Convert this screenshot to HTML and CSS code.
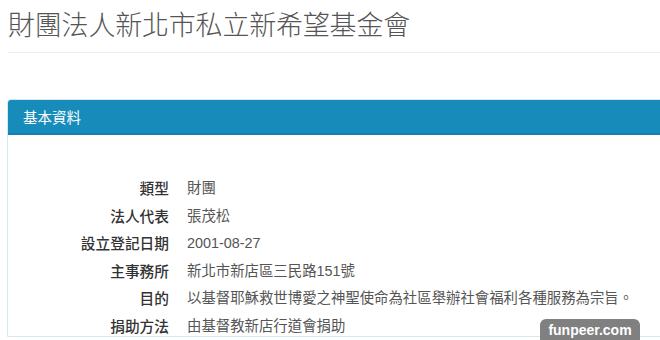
FILE: index.html
```html
<!DOCTYPE html>
<html lang="zh-Hant">
<head>
  <meta charset="UTF-8">
  <title>財團法人新北市私立新希望基金會</title>
  <link rel="stylesheet" href="styles.css">
</head>
<body>
  <div class="page">
    <!-- Page header -->
    <h1 class="page-title">財團法人新北市私立新希望基金會</h1>

    <!-- Basic info panel -->
    <div class="panel">
      <div class="panel-heading">基本資料</div>
      <dl class="info-list">
        <dt>類型</dt><dd>財團</dd>
        <dt>法人代表</dt><dd>張茂松</dd>
        <dt>設立登記日期</dt><dd>2001-08-27</dd>
        <dt>主事務所</dt><dd>新北市新店區三民路151號</dd>
        <dt>目的</dt><dd>以基督耶穌救世博愛之神聖使命為社區舉辦社會福利各種服務為宗旨。</dd>
        <dt>捐助方法</dt><dd>由基督教新店行道會捐助</dd>
      </dl>
    </div>
  </div>

  <div class="watermark">funpeer.com</div>
</body>
</html>
```

FILE: styles.css
```css
* {
  margin: 0;
  padding: 0;
  box-sizing: border-box;
}

html, body {
  overflow: hidden;
}

body {
  background: #fff;
  font-family: "Liberation Sans", "Noto Sans CJK TC", sans-serif;
  color: #555;
  height: 340px;
  position: relative;
}

.page {
  width: 680px;
  padding-left: 8px;
}

.page-title {
  font-family: "Noto Sans CJK TC", sans-serif;
  font-size: 27px;
  font-weight: 300;
  color: #555;
  line-height: 34px;
  padding-top: 7px;
  padding-bottom: 11px;
  border-bottom: 1px solid #eee;
  letter-spacing: -0.2px;
}

.panel {
  margin-top: 46px;
  margin-left: -1px;
  border: 1px solid #d6e9f2;
  border-radius: 4px 0 0 0;
}

.panel-heading {
  background: #178cbb;
  border-bottom: 2px solid #1480ad;
  color: #fff;
  font-family: "Noto Sans CJK TC", sans-serif;
  font-size: 14.5px;
  line-height: 33px;
  padding-left: 15px;
  border-radius: 3px 0 0 0;
}

.info-list {
  display: grid;
  grid-template-columns: 146px 1fr;
  column-gap: 18px;
  row-gap: 7.6px;
  padding: 43px 15px 0;
  line-height: 20px;
}

.info-list dt {
  text-align: right;
  font-family: "Noto Sans CJK TC", sans-serif;
  font-size: 14.7px;
  font-weight: 500;
  color: #333;
}

.info-list dd {
  font-size: 14.4px;
  color: #555;
}

.watermark {
  position: absolute;
  left: 540px;
  top: 319px;
  width: 100px;
  height: 26px;
  background: #808080;
  color: #fff;
  font-family: "Liberation Sans", sans-serif;
  font-weight: 700;
  font-size: 14px;
  line-height: 22px;
  text-align: center;
  border-radius: 6px;
}
```
